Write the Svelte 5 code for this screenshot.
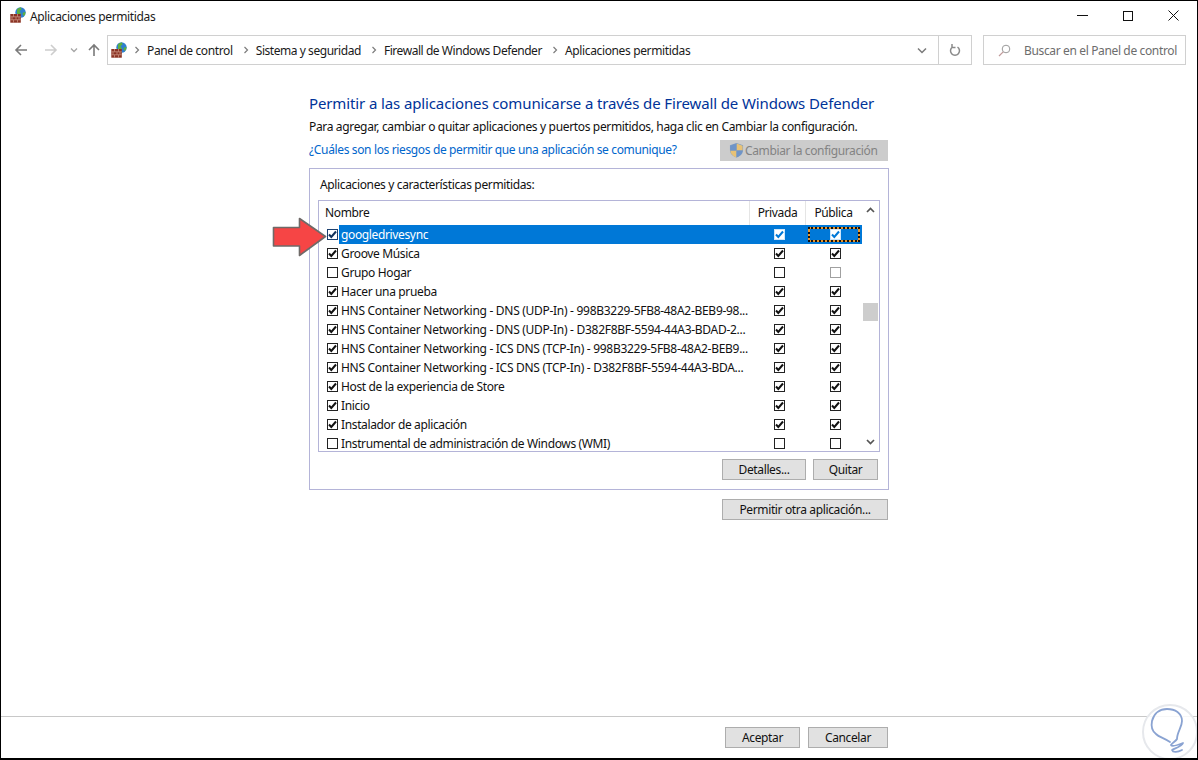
<script>
  const crumbs = ['Panel de control', 'Sistema y seguridad', 'Firewall de Windows Defender', 'Aplicaciones permitidas'];
  const rows = [
    { name: 'googledrivesync', on: true, pr: true, pu: true, sel: true },
    { name: 'Groove Música', on: true, pr: true, pu: true },
    { name: 'Grupo Hogar', on: false, pr: false, pu: false, dim: true },
    { name: 'Hacer una prueba', on: true, pr: true, pu: true },
    { name: 'HNS Container Networking - DNS (UDP-In) - 998B3229-5FB8-48A2-BEB9-98...', on: true, pr: true, pu: true, long: true },
    { name: 'HNS Container Networking - DNS (UDP-In) - D382F8BF-5594-44A3-BDAD-2...', on: true, pr: true, pu: true, long: true },
    { name: 'HNS Container Networking - ICS DNS (TCP-In) - 998B3229-5FB8-48A2-BEB9...', on: true, pr: true, pu: true, long: true },
    { name: 'HNS Container Networking - ICS DNS (TCP-In) - D382F8BF-5594-44A3-BDA...', on: true, pr: true, pu: true, long: true },
    { name: 'Host de la experiencia de Store', on: true, pr: true, pu: true },
    { name: 'Inicio', on: true, pr: true, pu: true },
    { name: 'Instalador de aplicación', on: true, pr: true, pu: true },
    { name: 'Instrumental de administración de Windows (WMI)', on: false, pr: false, pu: false }
  ];
</script>

{#snippet fw(size)}
  <svg class="fw" width={size} height={size} viewBox="0 0 16 16">
    <circle cx="10.500" cy="5.500" r="5.200" fill="#2f7fd0"/>
    <path d="M7 2.500c1-1.500 3-2.300 4-2l.5 2-2 1.500L11 7 9 8.500l-2-2z" fill="#5cb040"/>
    <path d="M12.500 6l3-1.200-.5 3.200-1.500 1z" fill="#5cb040"/>
    <rect x="0.300" y="7" width="10.500" height="8.700" fill="#8a3324"/>
    <path d="M0.300 9.800h10.500M0.300 12.800h10.500M3.500 7v2.800M7.500 7v2.800M2 9.800v3M6 9.800v3M9 9.800v3M3.500 12.800v3M7.500 12.800v3" stroke="#c98f7d" stroke-width="0.800" fill="none"/>
  </svg>
{/snippet}

{#snippet cb(on, cls)}
  <span class="cb {cls}">
    {#if on}
      <svg width="9" height="9" viewBox="0 0 9 9"><path d="M1 4.500l2.300 2.500L8 1.500" fill="none" stroke="currentColor" stroke-width="2"/></svg>
    {/if}
  </span>
{/snippet}

<div class="win">
  <header class="title">
    {@render fw(16)}
    <span class="title-text">Aplicaciones permitidas</span>
    <div class="wctl">
      <svg width="11" height="11" viewBox="0 0 11 11"><path d="M0 5.500h11" stroke="#111" fill="none"/></svg>
      <svg width="10" height="10" viewBox="0 0 10 10"><rect x="0.500" y="0.500" width="9" height="9" stroke="#111" fill="none"/></svg>
      <svg width="11" height="11" viewBox="0 0 11 11"><path d="M.5.500l10 10M10.500.5l-10 10" stroke="#111" fill="none"/></svg>
    </div>
  </header>

  <nav class="nav">
    <div class="navbtns">
      <svg width="14" height="14" viewBox="0 0 14 14"><path d="M13 7H2M7 2L2 7l5 5" stroke="#7a7a7a" stroke-width="1.600" fill="none"/></svg>
      <svg class="fwd" width="14" height="14" viewBox="0 0 14 14"><path d="M1 7h11M7 2l5 5-5 5" stroke="#cdcdcd" stroke-width="1.600" fill="none"/></svg>
      <svg class="drop" width="8" height="6" viewBox="0 0 8 6"><path d="M1 1.500l3 3 3-3" stroke="#a5a5a5" stroke-width="1.300" fill="none"/></svg>
      <svg class="up" width="14" height="14" viewBox="0 0 14 14"><path d="M7 13V2M2 7l5-5 5 5" stroke="#7a7a7a" stroke-width="1.600" fill="none"/></svg>
    </div>
    <div class="addr">
      {@render fw(16)}
      {#each crumbs as c, i}
        <svg class="sep" class:first={i === 0} width="6" height="8" viewBox="0 0 6 8"><path d="M1.500 1l3 3-3 3" stroke="#7c7c7c" stroke-width="1.200" fill="none"/></svg>
        <span class="crumb" class:tight={i === 1 || i === 2}>{c}</span>
      {/each}
      <span class="grow"></span>
      <svg class="chev" width="10" height="7" viewBox="0 0 10 7"><path d="M1 1.500l4 4 4-4" stroke="#7a7a7a" stroke-width="1.500" fill="none"/></svg>
      <span class="refresh">
        <svg width="12" height="14" viewBox="0 0 12 14"><path d="M3.500 4A4.500 4.500 0 1 0 8.500 4M3 1v3.500h3.500" stroke="#8a8a8a" stroke-width="1.500" fill="none"/></svg>
      </span>
    </div>
    <div class="search">
      <svg width="13" height="13" viewBox="0 0 13 13"><circle cx="8" cy="5" r="3.800" stroke="#9a9a9a" fill="none"/><path d="M5.200 7.800L1 12" stroke="#c09a9a" stroke-width="1.200"/></svg>
      <span class="search-text">Buscar en el Panel de control</span>
    </div>
  </nav>

  <main class="main">
    <div class="col">
      <h1>Permitir a las aplicaciones comunicarse a través de Firewall de Windows Defender</h1>
      <p>Para agregar, cambiar o quitar aplicaciones y puertos permitidos, haga clic en Cambiar la configuración.</p>
      <div class="linkrow">
        <span class="link">¿Cuáles son los riesgos de permitir que una aplicación se comunique?</span>
        <span class="changebtn">
          <svg width="15" height="17" viewBox="0 0 16 17">
            <path d="M8 .5l7 2.500v5c0 4-3 6.500-7 8-4-1.500-7-4-7-8V3z" fill="#7d9cc4"/>
            <path d="M8 1l6.500 2.300v5.200H8z" fill="#e8c276"/>
            <path d="M8 8.500v7.500c-3.500-1.300-6.500-3.800-6.500-7.500z" fill="#e8c276"/>
            <path d="M8 1L1.500 3.300v5.200H8z" fill="#6f94c8"/>
            <path d="M8 8.500h6.500c-.3 3.500-3 6-6.500 7.500z" fill="#6f94c8"/>
          </svg>
          <span class="changetext">Cambiar la configuración</span>
        </span>
      </div>

      <section class="group">
        <div class="grouplabel">Aplicaciones y características permitidas:</div>
        <div class="list">
          <div class="lhead">
            <span class="h-name">Nombre</span>
            <span class="h-col">Privada</span>
            <span class="h-col">Pública</span>
          </div>
          <div class="rows">
            {#each rows as r}
              <div class="row" class:sel={r.sel}>
                <span class="c0">{@render cb(r.on, r.sel ? 'focus' : '')}</span>
                <span class="rname" class:long={r.long}>{r.name}</span>
                <span class="cc">{@render cb(r.pr, r.sel ? 'inv' : '')}</span>
                <span class="cc" class:dots={r.sel}>{@render cb(r.pu, r.sel ? 'inv' : r.dim ? 'dim' : '')}</span>
              </div>
            {/each}
          </div>
          <div class="sbar">
            <svg width="9" height="6" viewBox="0 0 9 6"><path d="M1 5l3.500-3.500L8 5" stroke="#555" stroke-width="1.700" fill="none"/></svg>
            <span class="thumb"></span>
            <svg class="sdown" width="9" height="6" viewBox="0 0 9 6"><path d="M1 1l3.500 3.500L8 1" stroke="#555" stroke-width="1.700" fill="none"/></svg>
          </div>
        </div>
        <div class="groupbtns">
          <button class="b-det">Detalles...</button>
          <button class="b-qui">Quitar</button>
        </div>
      </section>

      <div class="otherrow"><button class="b-other">Permitir otra aplicación...</button></div>
    </div>
  </main>

  <footer class="foot">
    <button class="b-ok">Aceptar</button>
    <button class="b-can">Cancelar</button>
  </footer>

  <svg class="arrow" width="56" height="40" viewBox="0 0 56 40">
    <path d="M1.500 10.500H27.500V1.500L53.500 19.500 27.500 38.500V29H1.500z" fill="#f64545" stroke="#6f6a68" stroke-width="1.600" stroke-linejoin="round"/>
  </svg>

  <svg class="mark" width="60" height="56" viewBox="0 0 60 56">
    <circle cx="30" cy="28" r="27" fill="#fff" fill-opacity="0.85" stroke="#e6e8ec" stroke-width="2"/>
    <path d="M30 38C24 34 19 33 16 30 12 27 11 22 12 17 14 9 20 5 27 5 35 5 42 9 42 17 42 23 37 28 37 35 36 37 32 39 31 41 32 43 38 41 43 39 42 42 36 44 32 46 33 49 38 48 42 46" fill="none" stroke="#8aa3d2" stroke-width="1.800" stroke-linecap="round" stroke-linejoin="round"/>
  </svg>
</div>

<style>
  :global(body) { margin: 0; }
  * { box-sizing: border-box; }
  .win {
    position: relative; width: 1198px; height: 760px; background: #fff; overflow: hidden;
    border: 1px solid #000; border-bottom-width: 2px;
    display: flex; flex-direction: column;
    font: 12px/16px "Noto Sans", sans-serif; color: #1a1a1a;
    letter-spacing: -0.36px;
  }
  .title { height: 30px; display: flex; align-items: center; padding-left: 9px; flex: none; }
  .title .fw { margin-top: -2px; }
  .title-text { margin-left: 4px; padding-top: 2px; }
  .wctl { margin-left: auto; display: flex; gap: 35px; padding-right: 18px; align-items: center; margin-top: -1px; }
  .nav { height: 39px; flex: none; display: flex; align-items: center; padding-bottom: 1px; }
  .navbtns { width: 106px; flex: none; display: flex; align-items: center; padding-left: 13px; }
  .fwd { margin-left: 16px; }
  .drop { margin-left: 12px; }
  .up { margin-left: 9px; }
  .addr {
    width: 865px; height: 30px; border: 1px solid #d0d0d0; display: flex; align-items: center; padding-left: 3px; flex: none;
  }
  .sep { margin: 0 7px 0 8px; }
  .sep.first { margin-left: 7px; }
  .crumb { margin-right: 2px; padding-top: 2px; white-space: nowrap; }
  .crumb.tight { letter-spacing: -0.45px; }
  .grow { flex: 1; }
  .chev { margin-right: 11px; }
  .refresh { width: 33px; height: 100%; border-left: 1px solid #d0d0d0; display: flex; align-items: center; justify-content: center; }
  .search {
    margin-left: 11px; width: 203px; height: 30px; border: 1px solid #d0d0d0; display: flex; align-items: center; padding-left: 14px; gap: 13px; color: #6d6d6d; flex: none; white-space: nowrap;
  }
  .search-text { padding-top: 2px; }
  .main { flex: 1; display: flex; padding-left: 308px; padding-top: 22px; min-height: 0; }
  .col { width: 580px; }
  h1 { margin: 0; font-size: 15px; line-height: 22px; font-weight: 400; color: #003399; white-space: nowrap; letter-spacing: -0.12px; }
  p { margin: 5px 0 0; white-space: nowrap; color: #111; line-height: 16px; letter-spacing: -0.34px; }
  .linkrow { display: flex; justify-content: space-between; align-items: center; height: 22px; margin-top: 4px; padding-right: 1px; }
  .link { color: #0066cc; }
  .changebtn { width: 168px; height: 21px; background: #cccccc; color: #838383; display: flex; align-items: center; padding-left: 9px; gap: 1px; white-space: nowrap; }
  .changetext { padding-top: 2px; }
  .group { margin-top: 7px; height: 322px; border: 1px solid #b4b4d8; padding: 8px 8px 0; }
  .grouplabel { height: 15px; padding-left: 2px; color: #111; }
  .list { position: relative; margin-top: 8px; width: 562px; height: 252px; border: 1px solid #b4b4d8; overflow: hidden; }
  .lhead { display: flex; height: 24px; width: 543px; align-items: center; color: #111; }
  .h-name { width: 430px; padding-left: 6px; }
  .h-col { width: 56px; height: 100%; border-left: 1px solid #e5e5e5; display: flex; align-items: center; justify-content: center; }
  .rows { width: 543px; }
  .row { display: flex; height: 19px; align-items: center; color: #111; white-space: nowrap; }
  .c0 { width: 20px; padding-left: 8px; flex: none; display: flex; }
  .rname { width: 411px; flex: none; overflow: hidden; padding-left: 2px; height: 100%; line-height: 20px; }
  .rname.long { letter-spacing: -0.29px; }
  .cc { position: relative; width: 56px; flex: none; height: 100%; display: flex; align-items: center; justify-content: center; padding-left: 3px; }
  .row.sel .rname, .row.sel .cc { background: #0078d7; color: #fff; }
  .row.sel .cc.dots::after {
    content: ""; position: absolute; inset: 2px 2px 2px 2px; border: 2px dotted #111; background: linear-gradient(#e8952a, #e8952a) border-box;
    -webkit-mask: linear-gradient(#000 0 0) border-box, linear-gradient(#000 0 0) padding-box; -webkit-mask-composite: xor; mask-composite: exclude;
  }
  .cb { width: 11px; height: 11px; border: 1px solid #222; background: #fff; color: #111; display: flex; align-items: center; justify-content: center; flex: none; }
  .cb.dim { border-color: #a0a0a0; }
  .cb.inv { border-color: #cfe6fa; color: #0078d7; }
  .cb.focus { border-color: #1b3f6e; color: #12325c; }
  .sbar { position: absolute; right: 0; top: 0; bottom: 0; width: 17px; display: flex; flex-direction: column; align-items: center; padding-top: 6px; }
  .thumb { position: absolute; left: 1px; top: 102px; width: 15px; height: 18px; background: #cdcdcd; }
  .sdown { position: absolute; bottom: 6px; left: 4px; }
  button {
    font: inherit; letter-spacing: inherit; color: #111; height: 21px; background: #e1e1e1; border: 1px solid #adadad; padding: 0; display: block;
  }
  .groupbtns { display: flex; margin-top: 7px; padding-left: 404px; gap: 7px; }
  .b-det { width: 84px; }
  .b-qui { width: 65px; }
  .otherrow { margin-top: 9px; padding-left: 413px; }
  .b-other { width: 166px; }
  .foot { height: 42px; flex: none; border-top: 1px solid #c8c8c8; display: flex; padding: 10px 0 0 724px; gap: 8px; }
  .b-ok { width: 75px; }
  .b-can { width: 80px; }
  .arrow { position: absolute; left: 271px; top: 216px; }
  .mark { position: absolute; left: 1139px; top: 703px; }
</style>
